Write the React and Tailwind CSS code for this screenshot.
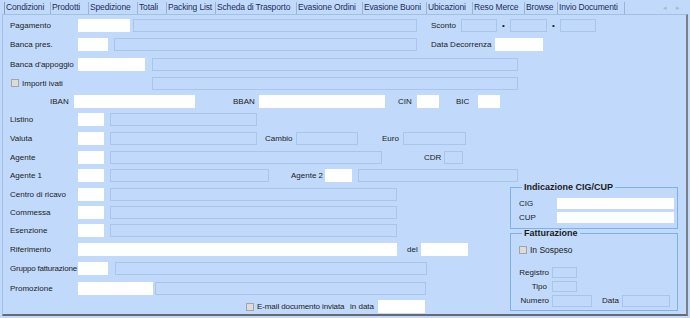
import React from 'react';

// small building blocks for the form controls
const Txt = ({ c = '', children }) => (
  <div className={`h-[13px] shrink-0 bg-white ${c}`}>{children}</div>
);
const Box = ({ c = '' }) => (
  <div className={`h-[13px] shrink-0 border border-[#a9c5ea] ${c}`} />
);
const Lbl = ({ c = '', children }) => (
  <span className={`shrink-0 whitespace-nowrap leading-none ${c}`}>{children}</span>
);
const Check = ({ c = '' }) => (
  <span className={`h-[8px] w-[8px] shrink-0 border border-[#a4a4a4] bg-[#dcdcdc] ${c}`} />
);

const tabs = [
  { name: 'Condizioni', w: 'w-[47px] border-l border-l-[#8c9cb4]' },
  { name: 'Prodotti', w: 'w-[38px]' },
  { name: 'Spedizione', w: 'w-[49px]' },
  { name: 'Totali', w: 'w-[29px]' },
  { name: 'Packing List', w: 'w-[49px]' },
  { name: 'Scheda di Trasporto', w: 'w-[81px]' },
  { name: 'Evasione Ordini', w: 'w-[66px]' },
  { name: 'Evasione Buoni', w: 'w-[64px]' },
  { name: 'Ubicazioni', w: 'w-[46px]' },
  { name: 'Reso Merce', w: 'w-[52px]' },
  { name: 'Browse', w: 'w-[33px]' },
  { name: 'Invio Documenti', w: 'w-[67px]' },
];

export default function App() {
  return (
    <div className="w-[690px] h-[318px] bg-[#c1dafb] font-['Liberation_Sans',Arial,sans-serif] text-[8px] text-[#1b1b1b] overflow-hidden">
      {/* Tab strip */}
      <div className="h-[14px] flex items-end pl-[4px]">
        {tabs.map((t) => (
          <div
            key={t.name}
            className={`${t.w} h-[12px] shrink-0 border-r border-r-[#9db3d2] pl-[1px] text-[8.5px] tracking-[-0.15px] leading-[11px] text-[#1d2d5c] whitespace-nowrap`}
          >
            {t.name}
          </div>
        ))}
        <div className="ml-auto mr-[10px] mb-[3px] flex gap-[9px] text-[7px] leading-none text-[#a9b6c6]">
          <span>◂</span>
          <span>▸</span>
        </div>
      </div>

      {/* Panel */}
      <div className="ml-[2px] w-[686px] h-[302px] border-t border-l border-[#a2bfe4] border-r-2 border-b-2 border-r-[#7a7f88] border-b-[#666b72] pt-[4px]">
        {/* Pagamento */}
        <div className="h-[19px] flex items-start pl-[7px]">
          <Lbl c="w-[68px] mt-[3px]">Pagamento</Lbl>
          <Txt c="w-[52px]" />
          <Box c="ml-[3px] w-[284px]" />
          <Lbl c="ml-[14px] w-[30px] mt-[3px]">Sconto</Lbl>
          <Box c="w-[36px]" />
          <Lbl c="w-[13px] text-center mt-[3px]">•</Lbl>
          <Box c="w-[37px]" />
          <Lbl c="w-[13px] text-center mt-[3px]">•</Lbl>
          <Box c="w-[36px]" />
        </div>

        {/* Banca pres. */}
        <div className="h-[20px] flex items-start pl-[7px]">
          <Lbl c="w-[68px] mt-[3px]">Banca pres.</Lbl>
          <Txt c="w-[30px]" />
          <Box c="ml-[6px] w-[303px]" />
          <Lbl c="ml-[14px] w-[64px] mt-[3px]">Data Decorrenza</Lbl>
          <Txt c="w-[48px]" />
        </div>

        {/* Banca d'appoggio */}
        <div className="h-[19px] flex items-start pl-[7px]">
          <Lbl c="w-[65px] mr-[3px] mt-[3px] overflow-hidden">Banca d'appoggio</Lbl>
          <Txt c="w-[67px]" />
          <Box c="ml-[7px] w-[366px]" />
        </div>

        {/* Importi ivati */}
        <div className="h-[18px] flex items-start pl-[7px]">
          <Check c="ml-[1px] mt-[2px]" />
          <Lbl c="ml-[3px] w-[130px] mt-[3px]">Importi ivati</Lbl>
          <Box c="w-[366px]" />
        </div>

        {/* IBAN / BBAN / CIN / BIC */}
        <div className="h-[18px] flex items-start pl-[7px]">
          <Lbl c="ml-[40px] w-[24px] mt-[3px]">IBAN</Lbl>
          <Txt c="w-[121px]" />
          <Lbl c="ml-[38px] w-[26px] mt-[3px]">BBAN</Lbl>
          <Txt c="w-[126px]" />
          <Lbl c="ml-[13px] w-[19px] mt-[3px]">CIN</Lbl>
          <Txt c="w-[22px]" />
          <Lbl c="ml-[17px] w-[22px] mt-[3px]">BIC</Lbl>
          <Txt c="w-[22px]" />
        </div>

        {/* Listino */}
        <div className="h-[19px] flex items-start pl-[7px]">
          <Lbl c="w-[68px] mt-[3px]">Listino</Lbl>
          <Txt c="w-[26px]" />
          <Box c="ml-[6px] w-[147px]" />
        </div>

        {/* Valuta */}
        <div className="h-[19px] flex items-start pl-[7px]">
          <Lbl c="w-[68px] mt-[3px]">Valuta</Lbl>
          <Txt c="w-[26px]" />
          <Box c="ml-[6px] w-[147px]" />
          <Lbl c="ml-[8px] w-[31px] mt-[3px]">Cambio</Lbl>
          <Box c="w-[62px]" />
          <Lbl c="ml-[24px] w-[21px] mt-[3px]">Euro</Lbl>
          <Box c="w-[63px]" />
        </div>

        {/* Agente */}
        <div className="h-[18px] flex items-start pl-[7px]">
          <Lbl c="w-[68px] mt-[3px]">Agente</Lbl>
          <Txt c="w-[26px]" />
          <Box c="ml-[6px] w-[272px]" />
          <Lbl c="ml-[42px] w-[20px] mt-[3px]">CDR</Lbl>
          <Box c="w-[19px]" />
        </div>

        {/* Agente 1 / Agente 2 */}
        <div className="h-[13px] flex items-start pl-[7px]">
          <Lbl c="w-[68px] mt-[3px]">Agente 1</Lbl>
          <Txt c="w-[26px]" />
          <Box c="ml-[6px] w-[159px]" />
          <Lbl c="ml-[22px] w-[34px] mt-[3px]">Agente 2</Lbl>
          <Txt c="w-[27px]" />
          <Box c="ml-[6px] w-[160px]" />
        </div>

        {/* Lower section: left form rows + right group boxes */}
        <div className="flex">
          <div className="w-[507px] shrink-0 pt-[6px]">
            <div className="h-[18px] flex items-start pl-[7px]">
              <Lbl c="w-[68px] mt-[3px]">Centro di ricavo</Lbl>
              <Txt c="w-[26px]" />
              <Box c="ml-[6px] w-[287px]" />
            </div>
            <div className="h-[18px] flex items-start pl-[7px]">
              <Lbl c="w-[68px] mt-[3px]">Commessa</Lbl>
              <Txt c="w-[26px]" />
              <Box c="ml-[6px] w-[287px]" />
            </div>
            <div className="h-[19px] flex items-start pl-[7px]">
              <Lbl c="w-[68px] mt-[3px]">Esenzione</Lbl>
              <Txt c="w-[26px]" />
              <Box c="ml-[6px] w-[287px]" />
            </div>
            <div className="h-[19px] flex items-start pl-[7px]">
              <Lbl c="w-[68px] mt-[3px]">Riferimento</Lbl>
              <Txt c="w-[319px]" />
              <Lbl c="ml-[10px] w-[14px] mt-[3px]">del</Lbl>
              <Txt c="w-[47px]" />
            </div>
            <div className="h-[20px] flex items-start pl-[7px]">
              <Lbl c="w-[68px] mt-[3px] tracking-[-0.2px]">Gruppo fatturazione</Lbl>
              <Txt c="w-[30px]" />
              <Box c="ml-[7px] w-[312px]" />
            </div>
            <div className="h-[18px] flex items-start pl-[7px]">
              <Lbl c="w-[68px] mt-[3px]">Promozione</Lbl>
              <Txt c="w-[75px]" />
              <Box c="ml-[2px] w-[271px]" />
            </div>
            <div className="h-[13px] flex items-start pl-[7px]">
              <Check c="ml-[236px] mt-[3px]" />
              <Lbl c="ml-[3px] w-[93px] mt-[3px] tracking-[-0.1px]">E-mail documento inviata</Lbl>
              <Lbl c="w-[28px] mt-[3px]">in data</Lbl>
              <Txt c="w-[47px]" />
            </div>
          </div>

          {/* Right column */}
          <div className="w-[168px] shrink-0">
            <fieldset className="w-[168px] h-[47px] border border-[#7fb0ec] pl-[8px] pt-[6px]">
              <legend className="ml-[3px] px-[2px] text-[9px] leading-[10px] font-bold text-[#1b1b1b]">
                Indicazione CIG/CUP
              </legend>
              <div className="h-[11px] flex items-center">
                <Lbl c="w-[38px]">CIG</Lbl>
                <div className="h-[11px] w-[117px] bg-white" />
              </div>
              <div className="mt-[3px] h-[11px] flex items-center">
                <Lbl c="w-[38px]">CUP</Lbl>
                <div className="h-[11px] w-[117px] bg-white" />
              </div>
            </fieldset>

            <fieldset className="-mt-[1px] w-[168px] h-[83px] border border-[#7fb0ec] pl-[8px]">
              <legend className="ml-[3px] px-[2px] text-[9px] leading-[10px] font-bold text-[#1b1b1b]">
                Fatturazione
              </legend>
              <div className="mt-[7px] h-[10px] flex items-center">
                <Check />
                <Lbl c="ml-[3px] text-[8.5px]">In Sospeso</Lbl>
              </div>
              <div className="mt-[12px] h-[11px] flex items-center">
                <Lbl c="w-[33px] pr-[3px] text-right">Registro</Lbl>
                <div className="h-[11px] w-[25px] border border-[#a9c5ea]" />
              </div>
              <div className="mt-[3px] h-[11px] flex items-center">
                <Lbl c="w-[33px] pr-[5px] text-right">Tipo</Lbl>
                <div className="h-[11px] w-[25px] border border-[#a9c5ea]" />
              </div>
              <div className="mt-[3px] h-[12px] flex items-center">
                <Lbl c="w-[33px] pr-[3px] text-right">Numero</Lbl>
                <div className="h-[12px] w-[40px] border border-[#a9c5ea]" />
                <Lbl c="ml-[10px] w-[20px]">Data</Lbl>
                <div className="h-[12px] w-[48px] border border-[#a9c5ea]" />
              </div>
            </fieldset>
          </div>
        </div>
      </div>
    </div>
  );
}
